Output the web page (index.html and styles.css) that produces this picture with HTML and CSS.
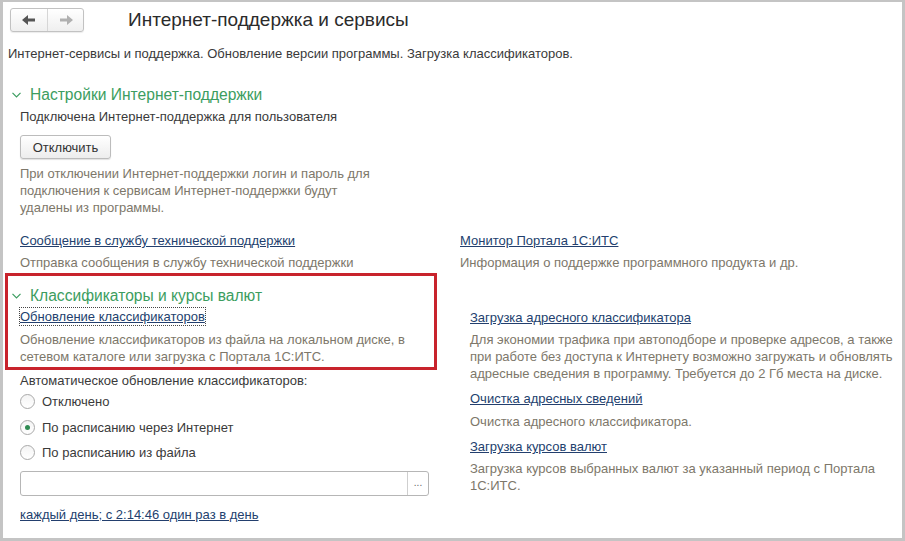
FILE: index.html
```html
<!DOCTYPE html>
<html lang="ru">
<head>
	<meta charset="UTF-8">
	<title>Интернет-поддержка и сервисы</title>
	<link rel="stylesheet" href="styles.css">
</head>
<body>
<div class="frame">
	<div class="top">
		<div class="nav">
			<span class="nav-btn">
				<svg width="14" height="10" viewBox="0 0 14 10"><path d="M0 5 L6 0 L6 3.5 L13 3.5 L13 6.5 L6 6.5 L6 10 Z" fill="#555"/></svg>
			</span>
			<span class="nav-btn">
				<svg width="14" height="10" viewBox="0 0 14 10"><path d="M14 5 L8 0 L8 3.5 L1 3.5 L1 6.5 L8 6.5 L8 10 Z" fill="#b0b0b0"/></svg>
			</span>
		</div>
		<h1 class="title">Интернет-поддержка и сервисы</h1>
	</div>

	<p class="subtitle">Интернет-сервисы и поддержка. Обновление версии программы. Загрузка классификаторов.</p>

	<div class="group-head first">
		<svg class="chevron" width="9" height="6" viewBox="0 0 9 6"><path d="M0.5 0.8 L4.5 4.8 L8.5 0.8" fill="none" stroke="#3c9d60" stroke-width="1.2"/></svg>
		<span>Настройки Интернет-поддержки</span>
	</div>
	<div class="support">
		<p class="text">Подключена Интернет-поддержка для пользователя</p>
		<button class="btn">Отключить</button>
		<p class="note narrow">При отключении Интернет-поддержки логин и пароль для подключения к сервисам Интернет-поддержки будут удалены из программы.</p>
	</div>

	<div class="links-row">
		<div>
			<a class="link" href="#">Сообщение в службу технической поддержки</a>
			<p class="note after-link">Отправка сообщения в службу технической поддержки</p>
		</div>
		<div>
			<a class="link" href="#">Монитор Портала 1С:ИТС</a>
			<p class="note after-link">Информация о поддержке программного продукта и др.</p>
		</div>
	</div>

	<div class="class-row">
		<div class="left-col">
			<div class="marked">
				<div class="group-head inner">
					<svg class="chevron" width="9" height="6" viewBox="0 0 9 6"><path d="M0.5 0.8 L4.5 4.8 L8.5 0.8" fill="none" stroke="#3c9d60" stroke-width="1.2"/></svg>
					<span>Классификаторы и курсы валют</span>
				</div>
				<div class="indent">
					<a class="link focused" href="#">Обновление классификаторов</a>
					<p class="note after-focus">Обновление классификаторов из файла на локальном диске, в сетевом каталоге или загрузка с Портала 1С:ИТС.</p>
				</div>
			</div>
			<div class="indent auto">
				<p class="text">Автоматическое обновление классификаторов:</p>
				<div class="radios">
					<label class="radio"><span class="circle"></span>Отключено</label>
					<label class="radio"><span class="circle on"></span>По расписанию через Интернет</label>
					<label class="radio"><span class="circle"></span>По расписанию из файла</label>
				</div>
				<div class="field">
					<span class="field-input"></span>
					<span class="field-btn">...</span>
				</div>
				<a class="link schedule" href="#">каждый день; с 2:14:46 один раз в день</a>
			</div>
		</div>
		<div class="right-col">
			<a class="link" href="#">Загрузка адресного классификатора</a>
			<p class="note after-link">Для экономии трафика при автоподборе и проверке адресов, а также при работе без доступа к Интернету возможно загружать и обновлять адресные сведения в программу. Требуется до 2 Гб места на диске.</p>
			<a class="link next" href="#">Очистка адресных сведений</a>
			<p class="note after-link2">Очистка адресного классификатора.</p>
			<a class="link next2" href="#">Загрузка курсов валют</a>
			<p class="note after-link">Загрузка курсов выбранных валют за указанный период с Портала 1С:ИТС.</p>
		</div>
	</div>
</div>
</body>
</html>
```

FILE: styles.css
```css
*{
	margin: 0;
	padding: 0;
	box-sizing: border-box;
}
body{
	font-family: "Liberation Sans", Arial, sans-serif;
	font-size: 13px;
	color: #3a3a3a;
	background: #c4c4c4;
}
.frame{
	width: 905px;
	height: 541px;
	border-style: solid;
	border-color: #c4c4c4;
	border-width: 2px 3px 3px 3px;
	background: #fff;
	overflow: hidden;
}
.top{
	display: flex;
	align-items: center;
	margin-top: 6px;
	height: 24px;
}
.nav{
	display: flex;
	margin-left: 7px;
	height: 24px;
	border: 1px solid #c2c2c2;
	border-radius: 3px;
	background: linear-gradient(#ffffff, #efefef);
	box-shadow: 0 1px 1px rgba(0,0,0,0.08);
}
.nav-btn{
	width: 36px;
	display: flex;
	align-items: center;
	justify-content: center;
}
.nav-btn + .nav-btn{
	border-left: 1px solid #d6d6d6;
}
.title{
	margin-left: 44px;
	font-size: 19px;
	font-weight: normal;
	color: #2b2b2b;
	line-height: 24px;
}
.subtitle{
	margin: 13px 0 0 5px;
	line-height: 17px;
	color: #3a3a3a;
}
.group-head{
	display: flex;
	align-items: center;
	height: 20px;
	font-size: 15.6px;
	color: #3c9d60;
}
.group-head.first{
	margin: 23px 0 0 9px;
}
.group-head .chevron{
	margin-right: 9px;
}
.text{
	line-height: 17px;
}
.support{
	padding-left: 17px;
}
.support .text{
	margin-top: 3px;
}
.btn{
	display: block;
	margin-top: 10px;
	width: 91px;
	height: 24px;
	font-family: inherit;
	font-size: 13px;
	color: #333;
	border: 1px solid #bcbcbc;
	border-radius: 3px;
	background: linear-gradient(#ffffff, #ededed);
	box-shadow: 0 1px 1px rgba(0,0,0,0.12);
}
.note{
	line-height: 17px;
	color: #7d776a;
}
.support .note{
	margin-top: 6px;
}
.narrow{
	max-width: 360px;
}
.link{
	display: inline-block;
	line-height: 17px;
	color: #233f6e;
	text-decoration: underline;
}
.links-row{
	display: grid;
	grid-template-columns: 440px 1fr;
	padding-left: 17px;
	margin-top: 16px;
}
.after-link{
	margin-top: 5px;
}
.class-row{
	display: grid;
	grid-template-columns: 432px 1fr;
	column-gap: 33px;
	margin: 2px 0 0 2px;
}
.marked{
	border: 3px solid #c8232c;
	padding: 10px 0 2px 4px;
}
.marked .indent{
	padding-left: 8px;
}
.focused{
	outline: 1px dotted #444;
	outline-offset: 0;
}
.after-focus{
	margin-top: 6px;
	max-width: 400px;
}
.group-head.inner + .indent{
	margin-top: 2px;
}
.auto{
	padding-left: 15px;
	margin-top: 2px;
}
.radios{
	display: flex;
	flex-direction: column;
}
.radio{
	display: flex;
	align-items: center;
	height: 25.5px;
	line-height: 17px;
}
.circle{
	width: 15px;
	height: 15px;
	margin-right: 7px;
	border: 1px solid #a9a9a9;
	border-radius: 50%;
	background: linear-gradient(#f4f4f4, #ffffff);
	display: flex;
	align-items: center;
	justify-content: center;
}
.circle.on::after{
	content: "";
	width: 5px;
	height: 5px;
	border-radius: 50%;
	background: #2f8a52;
}
.field{
	display: flex;
	margin-top: 5px;
	width: 409px;
	height: 25px;
	border: 1px solid #b6b6b6;
	border-radius: 3px;
	background: #fff;
}
.field-input{
	flex: 1;
}
.field-btn{
	width: 21px;
	border-left: 1px solid #cfcfcf;
	font-size: 10px;
	color: #666;
	text-align: center;
	line-height: 21px;
}
.schedule{
	margin-top: 10px;
}
.right-col{
	padding-top: 36px;
	max-width: 430px;
}
.right-col .link{
	display: block;
	width: max-content;
}
.next{
	margin-top: 8px;
}
.after-link2{
	margin-top: 6px;
}
.next2{
	margin-top: 8px;
}
```
